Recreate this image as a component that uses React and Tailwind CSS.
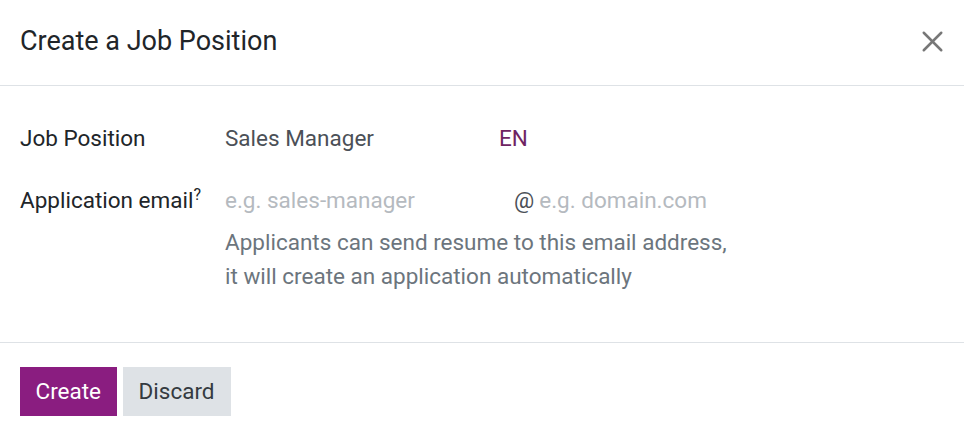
import { X } from "lucide-react";

const Field = ({ label, help, children }) => (
  <div className="flex items-center h-10">
    <div className="w-[205px] shrink-0 text-[#212529]">
      {label}
      {help && <sup className="text-[16px]">?</sup>}
    </div>
    {children}
  </div>
);

export default function App() {
  return (
    <div className="w-[964px] h-[436px] bg-white flex flex-col font-['Roboto',sans-serif] text-[22.5px]">
      <header className="h-[86px] border-b border-[#dee2e6] flex items-center justify-between px-5">
        <h1 className="text-[27px] text-[#212529] -mt-0.5">Create a Job Position</h1>
        <button className="text-[#777] -mr-1.5 -mt-0.5">
          <X size={35} strokeWidth={1.7} />
        </button>
      </header>

      <div className="px-5 pt-[33px] pb-[49px] flex flex-col">
        <Field label="Job Position">
          <div className="flex items-center w-[274px] text-[#4b5057]">Sales Manager</div>
          <span className="text-[#6e2463]">EN</span>
        </Field>

        <div className="mt-[22px]">
          <Field label="Application email" help>
            <div className="flex items-center">
              <span className="w-[289px] text-[#b5babf]">e.g. sales-manager</span>
              <span className="text-[#4b5057]">@</span>
              <span className="ml-[5px] text-[#b5babf]">e.g. domain.com</span>
            </div>
          </Field>
        </div>

        <p className="ml-[205px] mt-1 leading-[34px] text-[#6c757d]">
          Applicants can send resume to this email address,
          <br />
          it will create an application automatically
        </p>
      </div>

      <footer className="border-t border-[#dee2e6] px-5 pt-6 flex gap-1.5">
        <button className="h-[49px] px-[15.5px] bg-[#8a1d80] text-white">Create</button>
        <button className="h-[49px] px-4 bg-[#dee2e6] text-[#343a40]">Discard</button>
      </footer>
    </div>
  );
}
